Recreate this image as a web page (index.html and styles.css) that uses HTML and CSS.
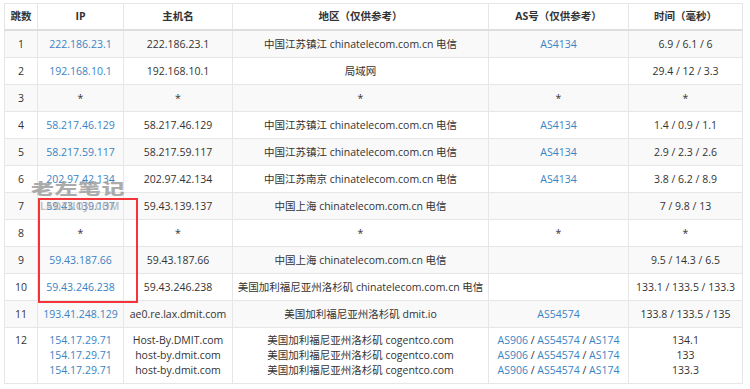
FILE: index.html
```html
<!DOCTYPE html>
<html lang="zh-CN">
<head>
    <meta charset="UTF-8">
    <title>路由追踪</title>
    <link rel="stylesheet" href="styles.css">
</head>
<body>
    <div class="wrap">
        <table class="trace">
            <colgroup>
                <col class="c-hop">
                <col class="c-ip">
                <col class="c-host">
                <col class="c-geo">
                <col class="c-as">
                <col class="c-time">
            </colgroup>
            <thead>
                <tr>
                    <th>跳数</th>
                    <th>IP</th>
                    <th>主机名</th>
                    <th>地区（仅供参考）</th>
                    <th>AS号（仅供参考）</th>
                    <th>时间（毫秒）</th>
                </tr>
            </thead>
            <tbody>
                <tr>
                    <td>1</td>
                    <td><a href="#">222.186.23.1</a></td>
                    <td>222.186.23.1</td>
                    <td>中国江苏镇江 chinatelecom.com.cn 电信</td>
                    <td><a href="#">AS4134</a></td>
                    <td>6.9 / 6.1 / 6</td>
                </tr>
                <tr>
                    <td>2</td>
                    <td><a href="#">192.168.10.1</a></td>
                    <td>192.168.10.1</td>
                    <td>局域网</td>
                    <td></td>
                    <td>29.4 / 12 / 3.3</td>
                </tr>
                <tr>
                    <td>3</td>
                    <td>*</td>
                    <td>*</td>
                    <td>*</td>
                    <td>*</td>
                    <td>*</td>
                </tr>
                <tr>
                    <td>4</td>
                    <td><a href="#">58.217.46.129</a></td>
                    <td>58.217.46.129</td>
                    <td>中国江苏镇江 chinatelecom.com.cn 电信</td>
                    <td><a href="#">AS4134</a></td>
                    <td>1.4 / 0.9 / 1.1</td>
                </tr>
                <tr>
                    <td>5</td>
                    <td><a href="#">58.217.59.117</a></td>
                    <td>58.217.59.117</td>
                    <td>中国江苏镇江 chinatelecom.com.cn 电信</td>
                    <td><a href="#">AS4134</a></td>
                    <td>2.9 / 2.3 / 2.6</td>
                </tr>
                <tr>
                    <td>6</td>
                    <td><a href="#">202.97.42.134</a></td>
                    <td>202.97.42.134</td>
                    <td>中国江苏南京 chinatelecom.com.cn 电信</td>
                    <td><a href="#">AS4134</a></td>
                    <td>3.8 / 6.2 / 8.9</td>
                </tr>
                <tr>
                    <td>7</td>
                    <td><a href="#">59.43.139.137</a></td>
                    <td>59.43.139.137</td>
                    <td>中国上海 chinatelecom.com.cn 电信</td>
                    <td></td>
                    <td>7 / 9.8 / 13</td>
                </tr>
                <tr>
                    <td>8</td>
                    <td>*</td>
                    <td>*</td>
                    <td>*</td>
                    <td>*</td>
                    <td>*</td>
                </tr>
                <tr>
                    <td>9</td>
                    <td><a href="#">59.43.187.66</a></td>
                    <td>59.43.187.66</td>
                    <td>中国上海 chinatelecom.com.cn 电信</td>
                    <td></td>
                    <td>9.5 / 14.3 / 6.5</td>
                </tr>
                <tr>
                    <td>10</td>
                    <td><a href="#">59.43.246.238</a></td>
                    <td>59.43.246.238</td>
                    <td>美国加利福尼亚州洛杉矶 chinatelecom.com.cn 电信</td>
                    <td></td>
                    <td>133.1 / 133.5 / 133.3</td>
                </tr>
                <tr>
                    <td>11</td>
                    <td><a href="#">193.41.248.129</a></td>
                    <td>ae0.re.lax.dmit.com</td>
                    <td>美国加利福尼亚州洛杉矶 dmit.io</td>
                    <td><a href="#">AS54574</a></td>
                    <td>133.8 / 133.5 / 135</td>
                </tr>
                <tr class="multi">
                    <td>12</td>
                    <td>
                        <a href="#">154.17.29.71</a><br>
                        <a href="#">154.17.29.71</a><br>
                        <a href="#">154.17.29.71</a>
                    </td>
                    <td>Host-By.DMIT.com<br>host-by.dmit.com<br>host-by.dmit.com</td>
                    <td>美国加利福尼亚州洛杉矶 cogentco.com<br>美国加利福尼亚州洛杉矶 cogentco.com<br>美国加利福尼亚州洛杉矶 cogentco.com</td>
                    <td>
                        <a href="#">AS906</a> / <a href="#">AS54574</a> / <a href="#">AS174</a><br>
                        <a href="#">AS906</a> / <a href="#">AS54574</a> / <a href="#">AS174</a><br>
                        <a href="#">AS906</a> / <a href="#">AS54574</a> / <a href="#">AS174</a>
                    </td>
                    <td>134.1<br>133<br>133.3</td>
                </tr>
            </tbody>
        </table>

        <div class="watermark">
            <div class="wm-cn">老左笔记</div>
            <div class="wm-en">LAOZUOJI.COM</div>
        </div>
        <div class="highlight"></div>
    </div>
</body>
</html>
```

FILE: styles.css
```css
body {
    margin: 0;
    background: #fff;
    color: #333;
    font-family: 'Open Sans', 'Noto Sans CJK SC', sans-serif;
    font-size: 10.5px;
}

.wrap {
    position: relative;
    padding: 3px 0 0 4px;
}

.trace {
    width: 738px;
    table-layout: fixed;
    border-collapse: collapse;
    border: 1px solid #e2e2e2;
}

.c-hop { width: 33px; }
.c-ip { width: 86px; }
.c-host { width: 109px; }
.c-geo { width: 256px; }
.c-as { width: 140px; }
.c-time { width: 114px; }

.trace th,
.trace td {
    padding: 5px 2px;
    border: 1px solid #e6e6e6;
    text-align: center;
    vertical-align: top;
    white-space: nowrap;
}

.trace th {
    line-height: 15px;
    font-weight: 700;
    color: #333;
    border-bottom: 2px solid #dedede;
}

.trace td {
    line-height: 16px;
}

.trace tbody tr:nth-child(odd) {
    background: #f9f9f9;
}

.trace tr.multi td {
    line-height: 15px;
}

.trace a {
    color: #3a83c4;
    text-decoration: none;
}

.watermark {
    position: absolute;
    left: 31px;
    top: 180px;
    pointer-events: none;
}

.wm-cn {
    font-family: 'Noto Sans CJK SC', sans-serif;
    font-size: 23px;
    font-weight: 900;
    line-height: 23px;
    letter-spacing: 0.5px;
    color: rgba(160, 160, 160, 0.88);
    transform: scaleY(0.66);
    transform-origin: left top;
}

.wm-en {
    margin: -3px 0 0 9px;
    font-size: 10px;
    font-weight: 700;
    line-height: 12px;
    letter-spacing: 0.4px;
    color: rgba(175, 175, 175, 0.75);
}

.highlight {
    position: absolute;
    left: 38px;
    top: 198px;
    width: 100px;
    height: 105px;
    box-sizing: border-box;
    border: 2px solid #f5343a;
}
```
